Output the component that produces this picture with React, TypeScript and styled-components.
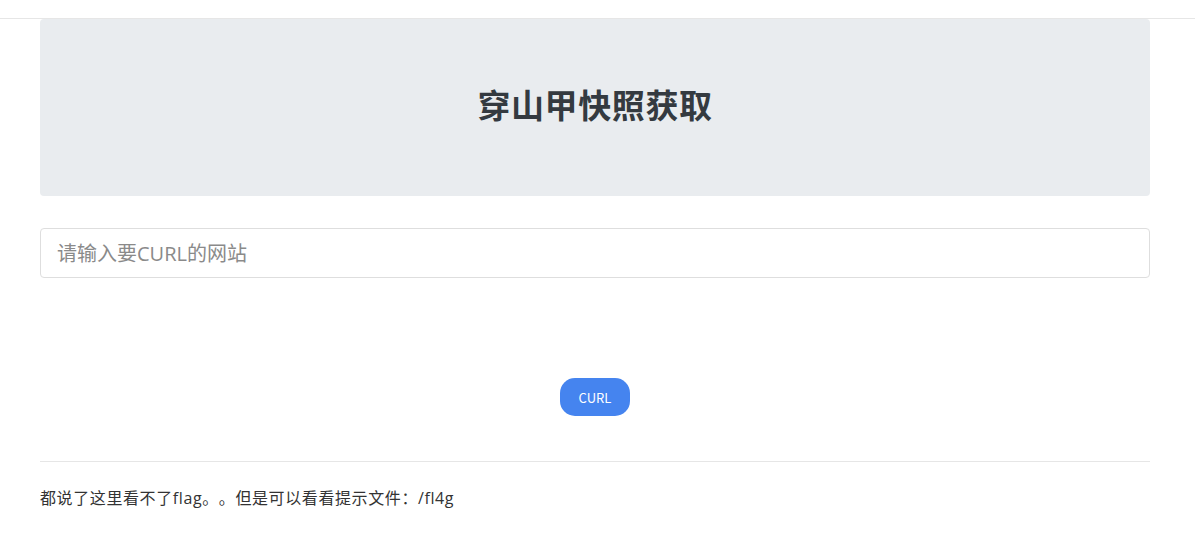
import React from "react";
import styled, { createGlobalStyle } from "styled-components";

const Global = createGlobalStyle`
  html, body { margin: 0; padding: 0; background: #fff; }
  body { font-family: "Noto Sans CJK SC", "Noto Sans", sans-serif; color: #212529; text-spacing-trim: space-all; }
  * { box-sizing: border-box; }
`;

const TopBar = styled.div`
  height: 19px;
  border-bottom: 1px solid #e6e6e6;
`;

const Container = styled.main`
  width: 1110px;
  margin-left: 40px;
  display: flex;
  flex-direction: column;
`;

const Jumbotron = styled.section`
  height: 177px;
  background: #e9ecef;
  border-radius: 4px;
  display: flex;
  align-items: center;
  justify-content: center;
  padding-bottom: 6px;
`;

const Title = styled.h1`
  margin: 0;
  font-size: 33px;
  font-weight: 700;
  color: #343a40;
  letter-spacing: 0.6px;
  line-height: 1;
`;

const Input = styled.input`
  margin-top: 32px;
  height: 50px;
  width: 100%;
  border: 1px solid #dedede;
  border-radius: 4px;
  padding: 0 16px;
  font-family: "Open Sans", "Noto Sans CJK SC", sans-serif;
  font-size: 20px;
  color: #333;
  outline: none;
  &::placeholder { color: #8a8a8a; }
`;

const ButtonRow = styled.div`
  display: flex;
  justify-content: center;
  margin-top: 100px;
`;

const Button = styled.button`
  width: 70px;
  height: 38px;
  border: none;
  border-radius: 15px;
  background: #4584ef;
  color: #fff;
  font-family: "Noto Sans CJK SC", "Noto Sans", sans-serif;
  font-size: 13px;
  cursor: pointer;
`;

const Rule = styled.hr`
  margin: 45px 0 0;
  border: none;
  border-top: 1px solid #e6e6e6;
`;

const Note = styled.p`
  margin: 24px 0 0;
  font-family: "Open Sans", "Noto Sans CJK SC", sans-serif;
  font-size: 16px;
  line-height: 24px;
  letter-spacing: 0.6px;
  color: #333;
  text-spacing-trim: space-all;
`;

export default function App() {
  return (
    <>
      <Global />
      <TopBar />
      <Container>
        <Jumbotron>
          <Title>穿山甲快照获取</Title>
        </Jumbotron>
        <Input placeholder="请输入要CURL的网站" />
        <ButtonRow>
          <Button>CURL</Button>
        </ButtonRow>
        <Rule />
        <Note>都说了这里看不了flag。。但是可以看看提示文件：/fl4g</Note>
      </Container>
    </>
  );
}
